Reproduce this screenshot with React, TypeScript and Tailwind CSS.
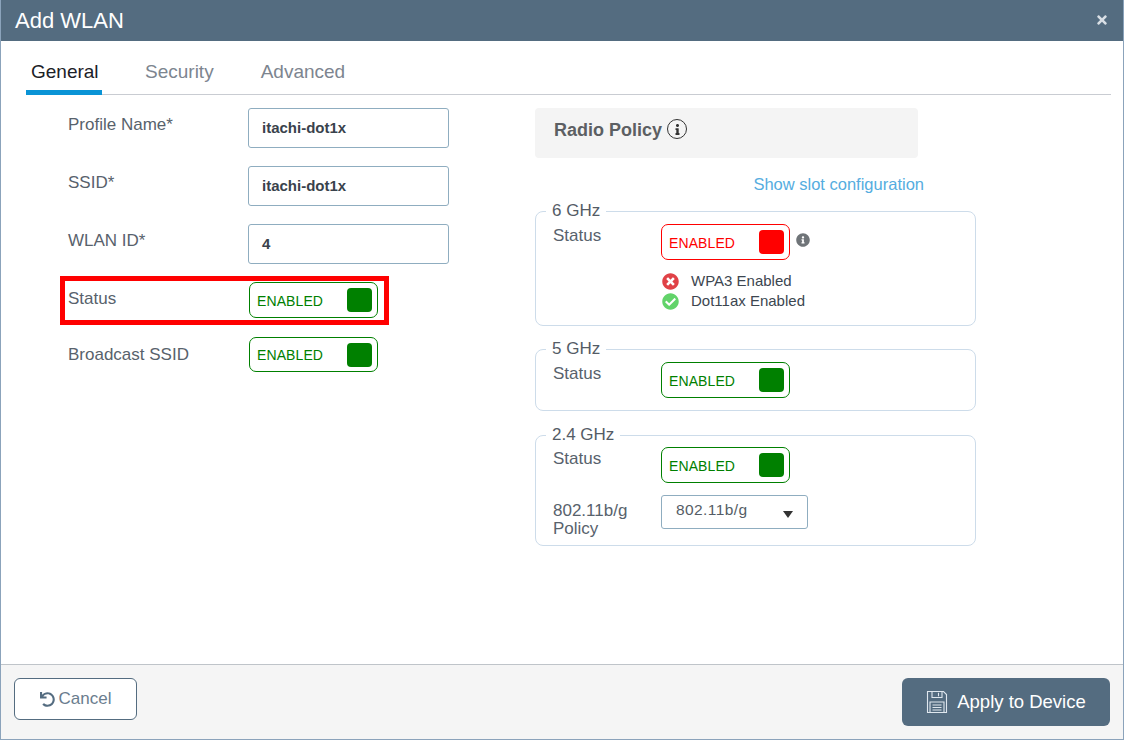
import React from "react";
import { FaTimes, FaUndo, FaInfoCircle, FaTimesCircle, FaCheckCircle, FaInfo } from "react-icons/fa";

const font = "font-['Open_Sans','Liberation_Sans',sans-serif]";

function Toggle({ red = false, w = "w-[129px]", h = "h-[36px]" }: { red?: boolean; w?: string; h?: string }) {
  return (
    <div
      className={`${w} ${h} flex items-center justify-between rounded-[7px] border bg-white pl-[7px] pr-[4px] ${
        red ? "border-[#ff0000] text-[#ff0000]" : "border-[#008000] text-[#008000]"
      }`}
    >
      <span className="text-[14px] leading-none font-['Liberation_Sans',sans-serif] tracking-[0.1px] mt-[1px]">ENABLED</span>
      <span className={`mr-[1px] h-[24px] w-[25px] rounded-[4px] ${red ? "bg-[#ff0000]" : "bg-[#008000]"}`} />
    </div>
  );
}

function Field({ label, value, mb }: { label: string; value: string; mb: string }) {
  return (
    <div className={`flex ${mb}`}>
      <div className="w-[181px] pl-[1px] pt-[5px] text-[17px] leading-[23px] text-[#58626c] font-['Liberation_Sans',sans-serif]">{label}</div>
      <div className="flex h-[40px] w-[201px] items-center rounded-[3px] border border-[#8fadc0] pl-[13px] text-[15px] font-semibold text-[#39424c] font-['Liberation_Sans',sans-serif]">
        {value}
      </div>
    </div>
  );
}

function Band({ name, legendW, className, children }: { name: string; legendW: string; className: string; children: React.ReactNode }) {
  return (
    <div className={`relative w-[441px] rounded-[8px] border border-[#cddcea] pl-[17px] ${className}`}>
      <span className={`absolute left-[10px] top-[-12px] bg-white px-[6px] text-[17px] leading-[22px] font-medium text-[#545c66] font-['Liberation_Sans',sans-serif] ${legendW}`}>
        {name}
      </span>
      {children}
    </div>
  );
}

function SaveIcon() {
  return (
    <svg width="22" height="24" viewBox="0 0 22 24" fill="none" stroke="#dfe7ee" strokeWidth="1.1">
      <path d="M1.5 1.5h16l3 3v18h-19z" />
      <path d="M6 1.5v6h10v-6" />
      <path d="M12.5 2.8v3.5" />
      <path d="M4 12h14v10.5H4z" />
      <path d="M6.5 15h9M6.5 17.5h9M6.5 20h9" />
    </svg>
  );
}

export default function App() {
  return (
    <div className={`relative flex h-[740px] w-[1124px] flex-col overflow-hidden border-x border-b border-[#8ba3bb] bg-white ${font}`}>
      <header className="-mx-[1px] flex h-[41px] shrink-0 items-center justify-between bg-[#546c80] pl-[15px] pr-[15px]">
        <h1 className="text-[22px] font-normal text-white font-['Liberation_Sans',sans-serif]">Add WLAN</h1>
        <FaTimes className="mt-[-2px] text-[#d9dfe5]" size={14} />
      </header>

      <main className="min-h-0 flex-1 pl-[25px] pr-[12px] pt-[14px]">
        <nav className="flex h-[40px] border-b border-[#c9ccd2] text-[19px] font-['Liberation_Sans',sans-serif]">
          <div className="h-[40px] w-[76px] border-b-[5px] border-[#0a94d6] pl-[5px] pt-[3px] leading-[28px] text-[#1b2026]">General</div>
          <div className="ml-[43px] pt-[3px] leading-[28px] text-[#7d858f]">Security</div>
          <div className="ml-[47px] pt-[3px] leading-[28px] text-[#7d858f]">Advanced</div>
        </nav>

        <div className="flex pt-[13px]">
          <section className="w-[509px] pl-[41px]">
            <Field label="Profile Name*" value="itachi-dot1x" mb="mb-[18px]" />
            <Field label="SSID*" value="itachi-dot1x" mb="mb-[18px]" />
            <Field label="WLAN ID*" value="4" mb="mb-[18px]" />
            <div className="mb-[19px] flex items-center">
              <div className="w-[182px] pl-[1px] text-[17px] leading-[23px] pb-[3px] text-[#58626c] font-['Liberation_Sans',sans-serif]">Status</div>
              <Toggle />
            </div>
            <div className="flex items-center">
              <div className="w-[182px] pl-[1px] text-[17px] leading-[23px] text-[#58626c] font-['Liberation_Sans',sans-serif]">Broadcast SSID</div>
              <Toggle h="h-[35px]" />
            </div>
          </section>

          <section className="flex-1">
            <div className="flex h-[50px] w-[383px] items-start gap-[5px] rounded-[4px] bg-[#f4f4f4] pl-[19px] pt-[10px]">
              <span className="text-[18px] leading-[25px] font-bold text-[#5c5f63] font-['Liberation_Sans',sans-serif]">Radio Policy</span>
              <span className="mt-[1px] flex h-[20px] w-[20px] items-center justify-center rounded-full border border-[#333]">
                <FaInfo size={11} className="text-[#333]" />
              </span>
            </div>
            <div className="mt-[16px] mb-[16px] w-[389px] text-right text-[16.5px] leading-[21px] text-[#55ade0] font-['Liberation_Sans',sans-serif]">
              Show slot configuration
            </div>

            <Band name="6 GHz" legendW="" className="h-[115px] pt-[12px]">
              <div className="flex items-start">
                <div className="w-[108px] text-[17px] leading-[23px] text-[#58626c] font-['Liberation_Sans',sans-serif] mt-[-5px] pt-[5px]">Status</div>
                <Toggle red />
                <FaInfoCircle className="ml-[6px] mt-[9px] text-[#6f7478]" size={14} />
              </div>
              <div className="ml-[108px] mt-[11px] text-[15px] leading-[20px] text-[#3c4650] font-['Liberation_Sans',sans-serif]">
                <div className="flex items-center">
                  <FaTimesCircle className="ml-[1px] mr-[12px] text-[#e04247]" size={17} />
                  <span>WPA3 Enabled</span>
                </div>
                <div className="flex items-center">
                  <FaCheckCircle className="ml-[1px] mr-[12px] text-[#62d36a]" size={17} />
                  <span>Dot11ax Enabled</span>
                </div>
              </div>
            </Band>

            <Band name="5 GHz" legendW="" className="mt-[23px] h-[62px] pt-[12px]">
              <div className="flex items-start">
                <div className="w-[108px] text-[17px] leading-[23px] text-[#58626c] font-['Liberation_Sans',sans-serif]">Status</div>
                <Toggle />
              </div>
            </Band>

            <Band name="2.4 GHz" legendW="" className="mt-[24px] h-[111px] pt-[11px]">
              <div className="flex items-start">
                <div className="w-[108px] text-[17px] leading-[23px] text-[#58626c] font-['Liberation_Sans',sans-serif]">Status</div>
                <Toggle />
              </div>
              <div className="mt-[12px] flex items-start">
                <div className="w-[108px] pt-[7px] text-[17px] leading-[18px] text-[#58626c] font-['Liberation_Sans',sans-serif]">
                  802.11b/g
                  <br />
                  Policy
                </div>
                <div className="flex h-[34px] w-[147px] items-center justify-between rounded-[3px] border border-[#8fadc0] pl-[14px] pr-[14px] text-[15.5px] tracking-[0.4px] text-[#555d66] font-['Liberation_Sans',sans-serif]">
                  <span className="mt-[-5px]">802.11b/g</span>
                  <svg width="10" height="7" viewBox="0 0 10 7" className="mt-[5px]"><path d="M0 0h10L5 7z" fill="#333" /></svg>
                </div>
              </div>
            </Band>
          </section>
        </div>
      </main>

      <footer className="-mx-[1px] flex h-[75px] shrink-0 items-start justify-between border-t border-[#bfc4c9] bg-[#f5f5f5] pl-[14px] pr-[14px] pt-[13px]">
        <button className="flex h-[42px] w-[123px] items-center justify-center gap-[4px] rounded-[6px] border border-[#546c80] bg-white text-[17px] text-[#6a7d8e] font-['Liberation_Sans',sans-serif]">
          <FaUndo size={15} className="text-[#546c80]" />
          Cancel
        </button>
        <button className="flex h-[48px] w-[208px] items-center justify-center gap-[9px] rounded-[6px] bg-[#546c80] text-[18.5px] text-white font-['Liberation_Sans',sans-serif]">
          <SaveIcon />
          Apply to Device
        </button>
      </footer>

      <div className="pointer-events-none absolute left-[59px] top-[276px] h-[49px] w-[329px] border-[5px] border-[#ff0000]" />
    </div>
  );
}
